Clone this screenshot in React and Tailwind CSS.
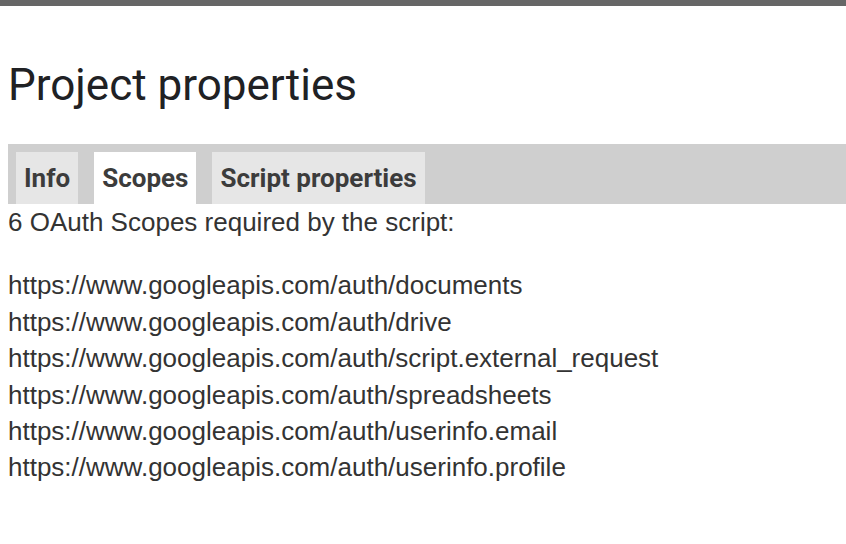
export default function App() {
  const scopes = [
    'https://www.googleapis.com/auth/documents',
    'https://www.googleapis.com/auth/drive',
    'https://www.googleapis.com/auth/script.external_request',
    'https://www.googleapis.com/auth/spreadsheets',
    'https://www.googleapis.com/auth/userinfo.email',
    'https://www.googleapis.com/auth/userinfo.profile',
  ]

  return (
    <div className="w-[846px] h-[544px] bg-white overflow-hidden">
      {/* top bar */}
      <div className="h-[6px] bg-[#666666]" />

      <div className="pl-2">
        <h1
          className="pt-[53px] text-[44px] leading-[52px] text-[#202124]"
          style={{ fontFamily: 'Roboto, sans-serif' }}
        >
          Project properties
        </h1>

        {/* tab strip */}
        <div
          className="mt-[33px] h-[60px] bg-[#cfcfcf] flex items-end gap-4 pl-2"
          style={{ fontFamily: 'Roboto, sans-serif' }}
        >
          <div className="h-[52px] px-2 flex items-center bg-[#e6e6e6] text-[26px] font-bold text-[#3c3c3c]">Info</div>
          <div className="h-[52px] px-2 flex items-center bg-white text-[26px] font-bold text-[#3c3c3c]">Scopes</div>
          <div className="h-[52px] px-2 flex items-center bg-[#e6e6e6] text-[26px] font-bold text-[#3c3c3c]">Script properties</div>
        </div>

        <div className="text-[26px] leading-[36.4px] text-[#333333]" style={{ fontFamily: '"Liberation Sans", Arial, sans-serif' }}>
          <p className="mb-[27px]">6 OAuth Scopes required by the script:</p>
          <ul>
            {scopes.map(s => (
              <li key={s}>{s}</li>
            ))}
          </ul>
        </div>
      </div>
    </div>
  )
}
